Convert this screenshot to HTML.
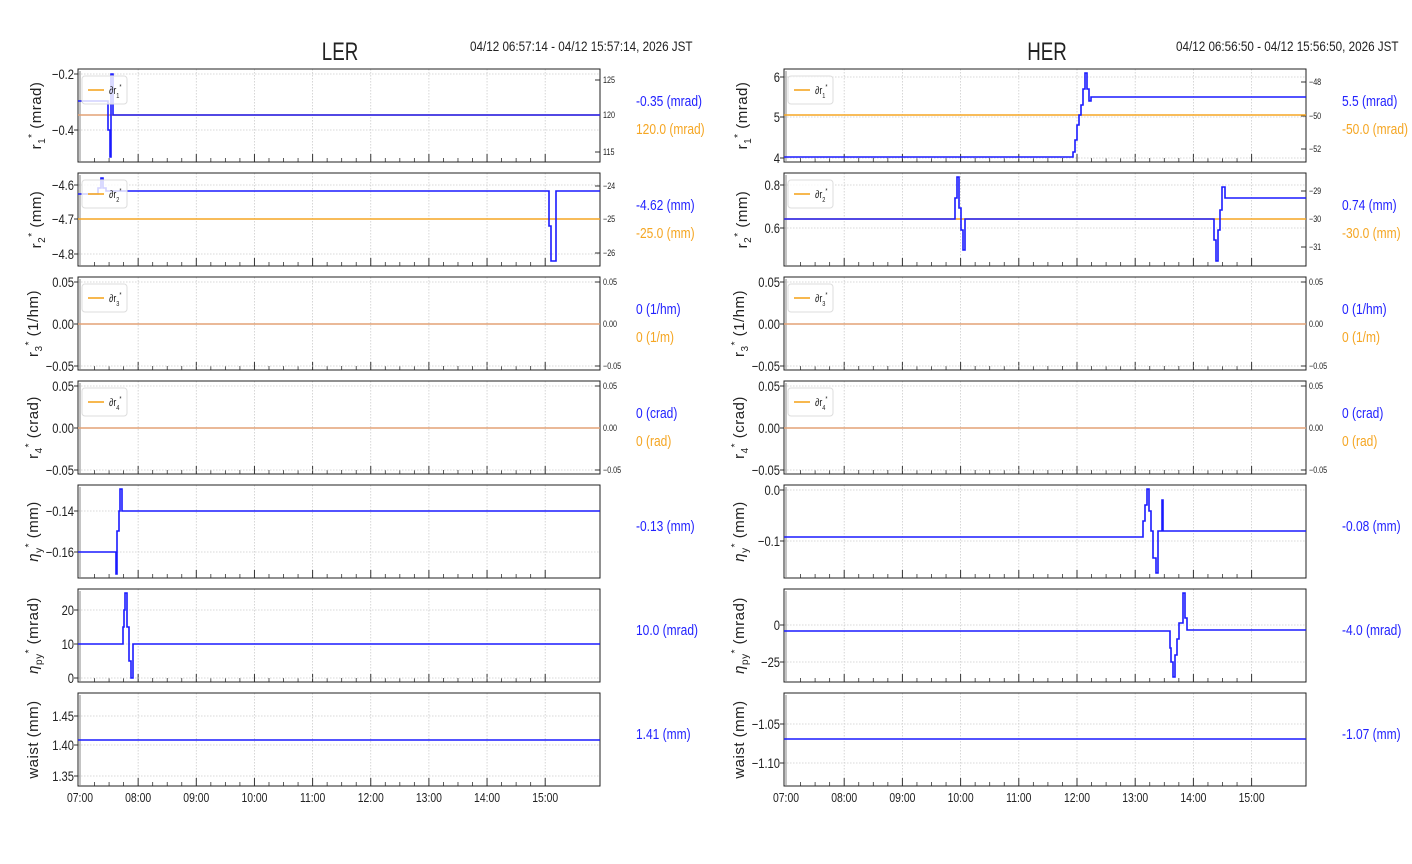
<!DOCTYPE html>
<html><head><meta charset="utf-8"><style>
html,body{margin:0;padding:0;background:#fff;width:1412px;height:864px;overflow:hidden}
text{font-family:"Liberation Sans",sans-serif}
</style></head><body>
<svg id="s" width="1412" height="864" xmlns="http://www.w3.org/2000/svg"></svg>
<script>
const S=document.getElementById('s');let h='';
const L=[78,600],R=[784,1306];
const rows=[69,173,277,381,485,589,693];const H=93;
const SX=0.8;
function txt(x,y,t,o={}){const sx=o.sx||SX;h+=`<text transform="translate(${x},${y}) scale(${sx},1)" font-size="${o.fs||13}" fill="${o.c||'#222'}" text-anchor="${o.a||'start'}">${t}</text>`;}
function panel(xr,y0,yt,rt){
 const [x0,x1]=xr;const y1=y0+H;
 const t0=xr===L?80:786,dx=xr===L?58.15:58.2;
 for(let i=0;i<9;i++){const x=t0+i*dx; if(i>0)h+=`<line x1="${x}" y1="${y0}" x2="${x}" y2="${y1}" stroke="#ccc" stroke-dasharray="1.5,1.5" stroke-width="0.8"/>`;
  h+=`<line x1="${x}" y1="${y1}" x2="${x}" y2="${y1-8}" stroke="#333" stroke-width="1"/>`;
  for(let k=1;k<4&&i<8;k++){const xm=x+k*dx/4;h+=`<line x1="${xm}" y1="${y1}" x2="${xm}" y2="${y1-4}" stroke="#333" stroke-width="0.8"/>`;}}
 for(const [v,y] of yt){h+=`<line x1="${x0}" y1="${y}" x2="${x1}" y2="${y}" stroke="#ccc" stroke-dasharray="1.5,1.5" stroke-width="0.8"/><line x1="${x0-4}" y1="${y}" x2="${x0}" y2="${y}" stroke="#333"/>`;txt(x0-4,y+5,v,{fs:14,a:'end'});}
 if(rt)for(const [v,y] of rt){h+=`<line x1="${x1}" y1="${y}" x2="${x1-5}" y2="${y}" stroke="#333"/>`;txt(x1+3,y+3,v,{fs:9});}
 h+=`<rect x="${x0}" y="${y0}" width="${x1-x0}" height="${H}" fill="none" stroke="#222" stroke-width="1"/>`;
 h+=`<line x1="${x0+2}" y1="${y0+2}" x2="${x0+2}" y2="${y1}" stroke="#888" stroke-width="1"/>`;
}
function pl(pts,c='#1a1aff',w=1.6){let d='M'+pts.map(p=>p.join(',')).join(' L');h+=`<path d="${d}" fill="none" stroke="${c}" stroke-width="${w}"/>`;}
function step(x0,pairs,xend){const p=[];let y=pairs[0][1];p.push([x0,y]);for(const [x,yy] of pairs){p.push([x,y]);p.push([x,yy]);y=yy;}p.push([xend,y]);return p;}
function legend(x,y,n){h+=`<rect x="${x}" y="${y}" width="45" height="28" rx="3" fill="#fff" fill-opacity="0.8" stroke="#ddd"/><line x1="${x+6}" y1="${y+14}" x2="${x+22}" y2="${y+14}" stroke="#f5a623" stroke-width="1.6"/>`;
 txt(x+27,y+18,`∂r<tspan font-size="7" dy="4">${n}</tspan><tspan font-size="7" dy="-9">*</tspan>`,{fs:11});}
function hl(xr,y,c,w=1.6){h+=`<line x1="${xr[0]}" y1="${y}" x2="${xr[1]}" y2="${y}" stroke="${c}" stroke-width="${w}"/>`;}
const OR='#f5a623',BL='#1a1aff';
panel(L,69,[['−0.2',74],['−0.4',130]],[['125',80],['120',115],['115',152]]);
hl(L,115,OR);hl(L,115,'#d9a0a0',1);
pl(step(78,[[78,101],[108,130],[110,157],[111,74],[113,115]],600),BL);
legend(82,76,'1');
panel(L,173,[['−4.6',185],['−4.7',219],['−4.8',254]],[['−24',186],['−25',219],['−26',253]]);
hl(L,219,OR);
pl(step(78,[[78,194],[92,194],[98,188],[101,178],[103,188],[106,191],[549,226],[551,261],[556,191]],600),BL);
legend(82,180,'2');
panel(L,277,[['0.05',282],['0.00',324],['−0.05',366]],[['0.05',282],['0.00',324],['−0.05',366]]);
hl(L,324,OR);hl(L,324,'#d9a0a0',1);legend(82,284,'3');
panel(L,381,[['0.05',386],['0.00',428],['−0.05',470]],[['0.05',386],['0.00',428],['−0.05',470]]);
hl(L,428,OR);hl(L,428,'#d9a0a0',1);legend(82,388,'4');
panel(L,485,[['−0.14',511],['−0.16',552]]);
pl(step(78,[[78,552],[116,574],[117,531],[119,511],[120,489],[122,511]],600),BL);
panel(L,589,[['20',610],['10',644],['0',678]]);
pl(step(78,[[78,644],[123,627],[124,610],[125,593],[127,627],[129,661],[131,678],[133,644]],600),BL);
panel(L,693,[['1.45',716],['1.40',745],['1.35',776]]);
hl(L,740,BL);
panel(R,69,[['6',77],['5',117],['4',158]],[['−48',82],['−50',116],['−52',149]]);
hl(R,115,OR);
pl(step(784,[[784,157],[1073,152],[1075,140],[1077,125],[1079,115],[1081,105],[1083,89],[1085,73],[1087,89],[1089,101],[1091,97]],1306),BL);
legend(788,76,'1');
panel(R,173,[['0.8',185],['0.6',228]],[['−29',191],['−30',219],['−31',247]]);
hl(R,219,OR);
pl(step(784,[[784,219],[955,198],[957,177],[959,208],[961,230],[963,250],[965,219],[1214,240],[1216,261],[1218,230],[1220,210],[1222,187],[1225,198]],1306),BL);
legend(788,180,'2');
panel(R,277,[['0.05',282],['0.00',324],['−0.05',366]],[['0.05',282],['0.00',324],['−0.05',366]]);
hl(R,324,OR);hl(R,324,'#d9a0a0',1);legend(788,284,'3');
panel(R,381,[['0.05',386],['0.00',428],['−0.05',470]],[['0.05',386],['0.00',428],['−0.05',470]]);
hl(R,428,OR);hl(R,428,'#d9a0a0',1);legend(788,388,'4');
panel(R,485,[['0.0',490],['−0.1',541]]);
pl(step(784,[[784,537],[1143,521],[1145,505],[1147,489],[1149,511],[1151,531],[1153,558],[1156,573],[1158,531],[1162,500],[1163,531]],1306),BL);
panel(R,589,[['0',625],['−25',662]]);
pl(step(784,[[784,631],[1170,648],[1171,662],[1173,677],[1175,655],[1177,639],[1179,623],[1183,593],[1185,618],[1187,630]],1306),BL);
panel(R,693,[['−1.05',724],['−1.10',763]]);
hl(R,739,BL);
const tl=['07:00','08:00','09:00','10:00','11:00','12:00','13:00','14:00','15:00'];
tl.forEach((t,i)=>{txt(80+i*58.15,802,t,{fs:13,a:'middle'});txt(786+i*58.2,802,t,{fs:13,a:'middle'});});
txt(340,60,'LER',{fs:25,a:'middle',sx:0.75});txt(1047,60,'HER',{fs:25,a:'middle',sx:0.75});
txt(470,51,'04/12 06:57:14 - 04/12 15:57:14, 2026 JST',{fs:14,sx:0.835});
txt(1176,51,'04/12 06:56:50 - 04/12 15:56:50, 2026 JST',{fs:14,sx:0.835});
const yl=['r<tspan font-size="10" dy="4">1</tspan><tspan font-size="10" dy="-10">*</tspan><tspan dy="6"> (mrad)</tspan>','r<tspan font-size="10" dy="4">2</tspan><tspan font-size="10" dy="-10">*</tspan><tspan dy="6"> (mm)</tspan>','r<tspan font-size="10" dy="4">3</tspan><tspan font-size="10" dy="-10">*</tspan><tspan dy="6"> (1/hm)</tspan>','r<tspan font-size="10" dy="4">4</tspan><tspan font-size="10" dy="-10">*</tspan><tspan dy="6"> (crad)</tspan>','<tspan font-style="italic">η</tspan><tspan font-size="10" dy="4">y</tspan><tspan font-size="10" dy="-10">*</tspan><tspan dy="6"> (mm)</tspan>','<tspan font-style="italic">η</tspan><tspan font-size="10" dy="4">py</tspan><tspan font-size="10" dy="-10">*</tspan><tspan dy="6"> (mrad)</tspan>','waist (mm)'];
yl.forEach((t,i)=>{const cy=rows[i]+H/2;
 [41,747].forEach(x=>{const xx=i>=2?x-3:x;h+=`<text transform="translate(${xx},${cy}) rotate(-90) scale(1.0,1)" font-size="15" fill="#222" text-anchor="middle" letter-spacing="0.5">${t}</text>`;});});
const lv=[['-0.35 (mrad)','120.0 (mrad)'],['-4.62 (mm)','-25.0 (mm)'],['0 (1/hm)','0 (1/m)'],['0 (crad)','0 (rad)'],['-0.13 (mm)'],['10.0 (mrad)'],['1.41 (mm)']];
const rv=[['5.5 (mrad)','-50.0 (mrad)'],['0.74 (mm)','-30.0 (mm)'],['0 (1/hm)','0 (1/m)'],['0 (crad)','0 (rad)'],['-0.08 (mm)'],['-4.0 (mrad)'],['-1.07 (mm)']];
[[lv,636],[rv,1342]].forEach(([arr,x])=>arr.forEach((a,i)=>{if(a[1]){const y=rows[i]+37;txt(x,y,a[0],{fs:15,c:'#2222ff'});txt(x,y+28,a[1],{fs:15,c:'#f5a623'});}else txt(x,rows[i]+46,a[0],{fs:15,c:'#2222ff'});}));
S.innerHTML=h;
</script>
</body></html>
